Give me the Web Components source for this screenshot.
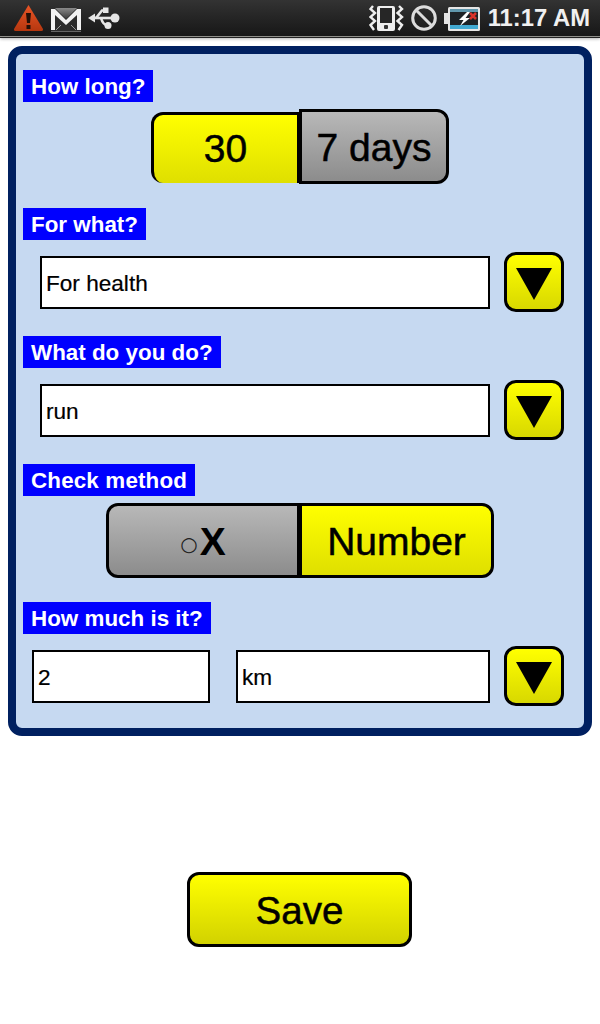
<!DOCTYPE html>
<html>
<head>
<meta charset="utf-8">
<title>Goal form</title>
<style>
  html, body { margin: 0; padding: 0; background: #fff; }
  body { width: 600px; height: 1024px; overflow: hidden; font-family: "Liberation Sans", Arial, sans-serif; }
  x-panel { margin: 9px 8px 0; }
  x-save { margin-top: 136px; }
</style>
</head>
<body>
<x-statusbar></x-statusbar>
<x-panel>
  <x-label>How long?</x-label>
  <x-seg style="margin-top:7px">
    <x-seg-item on style="width:149px;height:71px;margin-bottom:1px;border-bottom:0;padding-top:0">30</x-seg-item>
    <x-seg-item style="width:150px;height:75px">7 days</x-seg-item>
  </x-seg>
  <x-label style="margin-top:24px">For what?</x-label>
  <x-row style="margin-top:12px;padding-left:17px">
    <x-field style="width:450px">For health</x-field>
    <x-drop style="margin-left:14px"></x-drop>
  </x-row>
  <x-label style="margin-top:24px">What do you do?</x-label>
  <x-row style="margin-top:12px;padding-left:17px">
    <x-field style="width:450px">run</x-field>
    <x-drop style="margin-left:14px"></x-drop>
  </x-row>
  <x-label style="margin-top:24px;letter-spacing:.15px">Check method</x-label>
  <x-seg style="margin-top:7px">
    <x-seg-item style="width:194px;height:75px"><span style="font:20px 'DejaVu Sans',sans-serif;color:#222;-webkit-text-stroke:0;margin-top:3px">○</span><b style="-webkit-text-stroke:0;margin-left:2px">X</b></x-seg-item>
    <x-seg-item on style="width:195px;height:75px">Number</x-seg-item>
  </x-seg>
  <x-label style="margin-top:24px">How much is it?</x-label>
  <x-row style="margin-top:12px;padding-left:9px;padding-bottom:22px">
    <x-field style="width:178px">2</x-field>
    <x-field style="width:254px;margin-left:26px">km</x-field>
    <x-drop style="margin-left:14px"></x-drop>
  </x-row>
</x-panel>
<x-save>Save</x-save>

<script>
class XStatusbar extends HTMLElement {
  constructor() {
    super();
    this.attachShadow({ mode: 'open' });
    this.shadowRoot.innerHTML = `
      <style>
        :host {
          display: flex;
          align-items: flex-start;
          box-sizing: border-box;
          height: 37px;
          padding: 4px 10px 0 13px;
          background: linear-gradient(#333, #262626 45%, #171717);
          border-bottom: 1px solid #8f8f8a;
          box-shadow: 0 1px 0 #222, 0 2px 3px rgba(0,0,0,.3);
          color: #f0f0f0;
        }
        svg { display: block; flex: none; }
        .spacer { flex: 1; }
        .time { font: bold 23.8px/28px "Liberation Sans", Arial, sans-serif; margin-left: 8px; white-space: nowrap; }
      </style>
      <svg width="31" height="28" viewBox="13 4 31 28">
        <defs><linearGradient id="w" x1="0" y1="0" x2="0" y2="1"><stop offset="0" stop-color="#ea5526"/><stop offset="1" stop-color="#b5370f"/></linearGradient></defs>
        <path d="M28.500 5 L43 29 Q43.500 31 41.500 31 L15.500 31 Q13.500 31 14 29 Z" fill="url(#w)"/>
        <path d="M26 13 H31 L30 23 H27 Z" fill="#241008"/>
        <rect x="26.500" y="25" width="4" height="4" fill="#241008"/>
      </svg>
      <svg style="margin-left:7px" width="30" height="28" viewBox="51 4 30 28">
        <defs><linearGradient id="m" x1="0" y1="0" x2="0" y2="1"><stop offset="0" stop-color="#8a8a8a"/><stop offset="1" stop-color="#3a3a3a"/></linearGradient></defs>
        <rect x="51" y="8" width="30" height="23" fill="#2c2c2c"/>
        <path d="M55 8 H77 L66 19 Z" fill="url(#m)"/>
        <path d="M51 9 H55 L66 20 L77 9 H81 V30 H77 V15 L66 25 L55 15 V30 H51 Z" fill="#f2f2f2"/>
        <path d="M56 30 L61 25 M76 30 L71 25" stroke="#999" fill="none"/>
        <rect x="51" y="31.500" width="30" height="1.500" fill="#b0b0b0"/>
      </svg>
      <svg style="margin-left:7px" width="33" height="28" viewBox="88 4 33 28">
        <g fill="#e6e6e6" stroke="#e6e6e6" stroke-width="2.600">
          <path d="M91 18 H114" fill="none"/>
          <path d="M88 18 L95 13.500 V22.500 Z" stroke="none"/>
          <circle cx="115" cy="18" r="4.500" stroke="none"/>
          <path d="M96 18 L102 10.500 H106" fill="none"/>
          <rect x="103" y="7.500" width="5.500" height="5.500" stroke="none"/>
          <path d="M101 18 Q103 25 107 25" fill="none"/>
          <circle cx="108" cy="25.500" r="3.500" stroke="none"/>
        </g>
      </svg>
      <div class="spacer"></div>
      <svg width="35" height="28" viewBox="369 4 35 28">
        <rect x="377" y="6" width="18" height="25" rx="2" fill="#eee"/>
        <rect x="380" y="8" width="12" height="15" fill="#262626"/>
        <rect x="384" y="25" width="4" height="4" rx="1" fill="#333"/>
        <path d="M373 6 L370.500 9 L375 13 L370.500 17 L375 21 L370.500 25 L374 30" fill="none" stroke="#eee" stroke-width="2.400"/>
        <path d="M399 6 L402 9 L397.500 13 L402 17 L397.500 21 L402 25 L398.500 30" fill="none" stroke="#eee" stroke-width="2.400"/>
      </svg>
      <svg style="margin-left:7px" width="27" height="28" viewBox="411 4 27 28">
        <circle cx="424" cy="18" r="11.300" fill="none" stroke="#dcdcdc" stroke-width="3"/>
        <path d="M416 10 L432 26" stroke="#dcdcdc" stroke-width="3"/>
      </svg>
      <svg style="margin-left:6px" width="36" height="28" viewBox="444 4 36 28">
        <rect x="444" y="13" width="5" height="11" fill="#e4e4e4"/>
        <rect x="448" y="7" width="32" height="24" rx="1.500" fill="#e6e6e6"/>
        <rect x="450" y="9" width="28" height="20" fill="#1d2226"/>
        <rect x="450" y="9" width="28" height="3" fill="#5f97ad"/>
        <rect x="450" y="25" width="28" height="4" fill="#41a9d2"/>
        <path d="M467 12 L459 20 H463.500 L460 26 L470 18 H465.500 L470 12 Z" fill="#fff"/>
        <path d="M470 13 L476 19 M476 13 L470 19" stroke="#d8322a" stroke-width="2.500"/>
      </svg>
      <span class="time">11:17 AM</span>
    `;
  }
}

class XPanel extends HTMLElement {
  constructor() {
    super();
    this.attachShadow({ mode: 'open' });
    this.shadowRoot.innerHTML = `
      <style>
        :host {
          display: block;
          box-sizing: border-box;
          width: 584px;
          padding: 16px 0 0 7px;
          background: #c6d9f1;
          border: 8px solid #002060;
          border-radius: 14px;
        }
      </style>
      <slot></slot>
    `;
  }
}

class XLabel extends HTMLElement {
  constructor() {
    super();
    this.attachShadow({ mode: 'open' });
    this.shadowRoot.innerHTML = `
      <style>
        :host {
          display: block;
          width: fit-content;
          height: 32px;
          box-sizing: border-box;
          padding: 0 8px;
          background: #0000ff;
          color: #fff;
          font: bold 22.4px/33px "Liberation Sans", Arial, sans-serif;
        }
      </style>
      <slot></slot>
    `;
  }
}

class XSeg extends HTMLElement {
  constructor() {
    super();
    this.attachShadow({ mode: 'open' });
    this.shadowRoot.innerHTML = `
      <style>
        :host {
          display: flex;
          justify-content: center;
          align-items: flex-end;
          margin-right: 7px;
        }
        ::slotted(x-seg-item:first-child) { border-radius: 12px 0 0 12px; }
        ::slotted(x-seg-item:last-child) { border-radius: 0 12px 12px 0; margin-left: -1px; }
      </style>
      <slot></slot>
    `;
  }
}

class XSegItem extends HTMLElement {
  constructor() {
    super();
    this.attachShadow({ mode: 'open' });
    this.shadowRoot.innerHTML = `
      <style>
        :host {
          display: flex;
          align-items: center;
          justify-content: center;
          box-sizing: border-box;
          padding-top: 3px;
          border: 3px solid #000;
          background: linear-gradient(#b8b8b8, #8c8c8c);
          color: #000;
          font: 39px "Liberation Sans", Arial, sans-serif;
          -webkit-text-stroke: .5px #000;
        }
        :host([on]) { background: linear-gradient(#ffff00, #dfdf00); }
      </style>
      <slot></slot>
    `;
  }
}

class XRow extends HTMLElement {
  constructor() {
    super();
    this.attachShadow({ mode: 'open' });
    this.shadowRoot.innerHTML = `
      <style>
        :host { display: flex; align-items: center; }
      </style>
      <slot></slot>
    `;
  }
}

class XField extends HTMLElement {
  constructor() {
    super();
    this.attachShadow({ mode: 'open' });
    this.shadowRoot.innerHTML = `
      <style>
        :host {
          display: block;
          box-sizing: border-box;
          height: 53px;
          padding: 0 4px;
          background: #fff;
          border: 2px solid #000;
          color: #000;
          font: 22.6px/52px "Liberation Sans", Arial, sans-serif;
          -webkit-text-stroke: .2px #000;
        }
      </style>
      <slot></slot>
    `;
  }
}

class XDrop extends HTMLElement {
  constructor() {
    super();
    this.attachShadow({ mode: 'open' });
    this.shadowRoot.innerHTML = `
      <style>
        :host {
          display: flex;
          align-items: center;
          justify-content: center;
          box-sizing: border-box;
          width: 60px;
          height: 60px;
          background: linear-gradient(#ffff00, #d8d800);
          border: 3px solid #000;
          border-radius: 12px;
        }
        svg { display: block; margin-top: 3px; }
      </style>
      <svg width="36" height="32" viewBox="0 0 36 32"><path d="M0 0 H36 L18 32 Z" fill="#000"/></svg>
    `;
  }
}

class XSave extends HTMLElement {
  constructor() {
    super();
    this.attachShadow({ mode: 'open' });
    this.shadowRoot.innerHTML = `
      <style>
        :host {
          display: flex;
          align-items: center;
          justify-content: center;
          box-sizing: border-box;
          width: 225px;
          height: 75px;
          margin-left: 187px;
          padding-top: 3px;
          background: linear-gradient(#ffff00, #d2d200);
          border: 3px solid #000;
          border-radius: 12px;
          color: #000;
          font: 38.5px "Liberation Sans", Arial, sans-serif;
          -webkit-text-stroke: .5px #000;
        }
      </style>
      <slot></slot>
    `;
  }
}

customElements.define('x-statusbar', XStatusbar);
customElements.define('x-panel', XPanel);
customElements.define('x-label', XLabel);
customElements.define('x-seg', XSeg);
customElements.define('x-seg-item', XSegItem);
customElements.define('x-row', XRow);
customElements.define('x-field', XField);
customElements.define('x-drop', XDrop);
customElements.define('x-save', XSave);
</script>
</body>
</html>
